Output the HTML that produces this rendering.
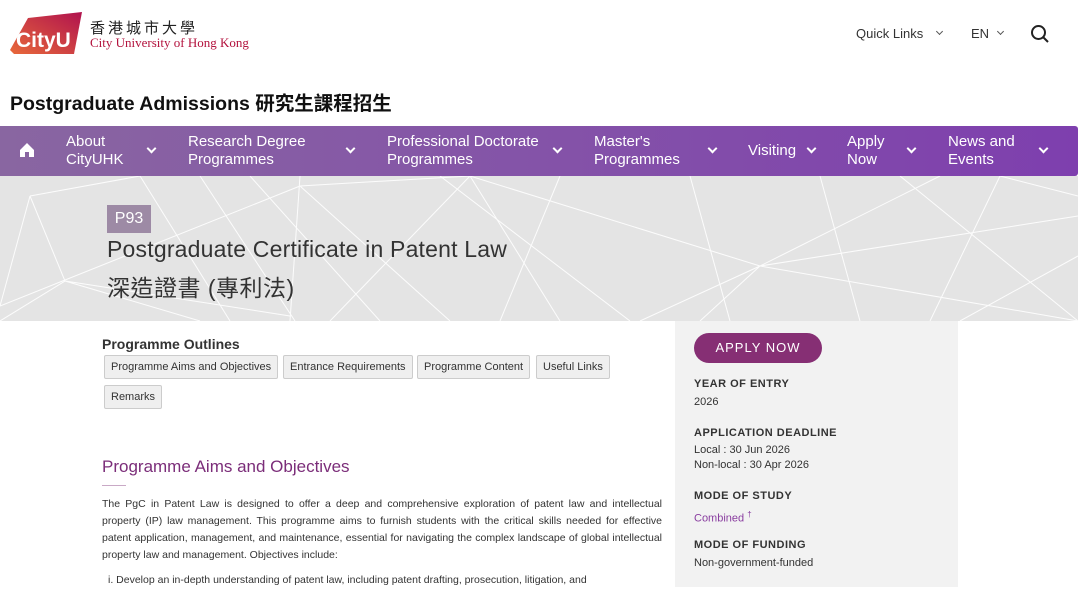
<!DOCTYPE html>
<html><head><meta charset="utf-8"><style>
*{margin:0;padding:0;box-sizing:border-box}
body{width:1080px;height:587px;overflow:hidden;background:#fff;font-family:"Liberation Sans","Noto Sans CJK TC",sans-serif;color:#333;position:relative}
.abs{position:absolute}
.nav{left:0;top:126px;width:1078px;height:50px;background:linear-gradient(90deg,#8966a1,#8453a8 50%,#7e3fae);border-radius:0 3px 3px 0;color:#fff;font-size:15px;line-height:18px}
.nav .it{position:absolute;top:7px}
.chev{position:absolute;width:7px;height:7px;border-right:2px solid #fff;border-bottom:2px solid #fff;transform:rotate(45deg)}
.hero{left:0;top:176px;width:1078px;height:145px;background:#e4e4e4;overflow:hidden}
.btn{position:absolute;height:24px;border:1px solid #ccc;background:#efefef;font-size:11px;line-height:22px;padding:0 6px;color:#333;border-radius:2px}
.side{left:675px;top:321px;width:283px;height:266px;background:#f2f2f2}
.lab{position:absolute;left:19px;font-size:11px;font-weight:bold;letter-spacing:.5px;color:#333}
.val{position:absolute;left:19px;font-size:11px;color:#333;line-height:15px}
.p{position:absolute;left:102px;width:560px;font-size:10.5px;line-height:17px;text-align:justify;color:#333}
</style></head><body>
<svg class="abs" style="left:8px;top:10px" width="78" height="46" viewBox="0 0 78 46">
<defs><linearGradient id="g" x1="0" x2="1" y1="1" y2="0"><stop offset="0" stop-color="#e8693a"/><stop offset="1" stop-color="#b0124e"/></linearGradient></defs>
<path d="M2 40 L20 8 L74 2 L66 44 L6 44 Z" fill="url(#g)"/>
<text x="8" y="37" font-family="Liberation Sans" font-weight="bold" font-size="21" fill="#fff">CityU</text>
</svg>
<div class="abs" style="left:90px;top:17px;font-size:15px;letter-spacing:3px;color:#222">香港城市大學</div>
<div class="abs" style="left:90px;top:35px;font-size:13px;color:#b3123d;font-family:'Liberation Serif',serif">City University of Hong Kong</div>
<div class="abs" style="left:856px;top:26px;font-size:13px;color:#333">Quick Links</div>
<div class="chev" style="left:937px;top:29px;width:5px;height:5px;border-color:#555;border-width:1px"></div>
<div class="abs" style="left:971px;top:26px;font-size:13px;color:#333">EN</div>
<div class="chev" style="left:998px;top:29px;width:5px;height:5px;border-color:#555;border-width:1px"></div>
<svg class="abs" style="left:1030px;top:24px" width="20" height="20" viewBox="0 0 20 20"><circle cx="8.5" cy="8.5" r="6.5" fill="none" stroke="#222" stroke-width="2"/><path d="M13 13 L18 18" stroke="#222" stroke-width="2"/></svg>
<div class="abs" style="left:10px;top:87px;font-size:19.5px;font-weight:bold;color:#111">Postgraduate Admissions 研究生課程招生</div>
<div class="abs nav">
<svg class="abs" style="left:19px;top:16px" width="16" height="16" viewBox="0 0 16 16"><path d="M1 8 L8 1 L15 8 L15 15 L10 15 L10 10 L6 10 L6 15 L1 15Z" fill="#fff"/></svg>
<div class="it" style="left:66px">About<br>CityUHK</div><div class="chev" style="left:148px;top:19px"></div>
<div class="it" style="left:188px">Research Degree<br>Programmes</div><div class="chev" style="left:347px;top:19px"></div>
<div class="it" style="left:387px">Professional Doctorate<br>Programmes</div><div class="chev" style="left:554px;top:19px"></div>
<div class="it" style="left:594px">Master's<br>Programmes</div><div class="chev" style="left:709px;top:19px"></div>
<div class="it" style="left:748px;top:16px">Visiting</div><div class="chev" style="left:808px;top:19px"></div>
<div class="it" style="left:847px">Apply<br>Now</div><div class="chev" style="left:908px;top:19px"></div>
<div class="it" style="left:948px">News and<br>Events</div><div class="chev" style="left:1040px;top:19px"></div>
</div>
<div class="abs hero">
<svg width="1078" height="145" style="position:absolute;left:0;top:0" stroke="#fff" stroke-width="1" fill="none" opacity=".9">
<path d="M30 20 L0 130 M30 20 L140 0 M30 20 L65 105 L0 145 M65 105 L200 145 M65 105 L290 140 M140 0 L230 145 M200 0 L295 145 M300 0 L290 145 M300 10 L470 0 M300 10 L450 145 M300 10 L0 130 M440 0 L630 145 M470 0 L560 145 M470 0 L330 145 M470 0 L760 90 L1078 40 M760 90 L640 145 M760 90 L700 145 M760 90 L940 0 M760 90 L1078 145 M690 0 L730 145 M820 0 L860 145 M900 0 L1078 145 M1000 0 L930 145 M1078 80 L960 145 M1078 20 L1000 0 M250 0 L380 145 M560 0 L500 145"/>
</svg>
<div class="abs" style="left:107px;top:29px;width:44px;height:28px;background:#9d8aa5;color:#fff;font-size:16px;line-height:28px;text-align:center">P93</div>
<div class="abs" style="left:107px;top:60px;font-size:23px;letter-spacing:0.2px;color:#333">Postgraduate Certificate in Patent Law</div>
<div class="abs" style="left:107px;top:93px;font-size:23px;letter-spacing:0.5px;color:#333">深造證書 (專利法)</div>
</div>
<div class="abs" style="left:102px;top:336px;font-size:14px;font-weight:bold;color:#333">Programme Outlines</div>
<div class="btn" style="left:104px;top:355px">Programme Aims and Objectives</div>
<div class="btn" style="left:283px;top:355px">Entrance Requirements</div>
<div class="btn" style="left:417px;top:355px">Programme Content</div>
<div class="btn" style="left:536px;top:355px">Useful Links</div>
<div class="btn" style="left:104px;top:385px">Remarks</div>
<div class="abs" style="left:102px;top:457px;font-size:17px;color:#7b2d79">Programme Aims and Objectives</div>
<div class="abs" style="left:102px;top:485px;width:24px;height:1px;background:#c9a9c6"></div>
<div class="p" style="top:496px">The PgC in Patent Law is designed to offer a deep and comprehensive exploration of patent law and intellectual property (IP) law management. This programme aims to furnish students with the critical skills needed for effective patent application, management, and maintenance, essential for navigating the complex landscape of global intellectual property law and management. Objectives include:</div>
<div class="p" style="top:572px;left:108px">i. Develop an in-depth understanding of patent law, including patent drafting, prosecution, litigation, and</div>
<div class="abs side">
<div class="abs" style="left:19px;top:12px;width:128px;height:30px;border-radius:15px;background:#862f74;color:#fff;font-size:13px;letter-spacing:1px;line-height:30px;text-align:center">APPLY NOW</div>
<div class="lab" style="top:57px">YEAR OF ENTRY</div>
<div class="val" style="top:74px">2026</div>
<div class="lab" style="top:106px">APPLICATION DEADLINE</div>
<div class="val" style="top:122px">Local : 30 Jun 2026<br>Non-local : 30 Apr 2026</div>
<div class="lab" style="top:169px">MODE OF STUDY</div>
<div class="val" style="top:186px;color:#8a3ea0">Combined <sup style="font-size:8px">†</sup></div>
<div class="lab" style="top:218px">MODE OF FUNDING</div>
<div class="val" style="top:235px">Non-government-funded</div>
</div>
</body></html>
